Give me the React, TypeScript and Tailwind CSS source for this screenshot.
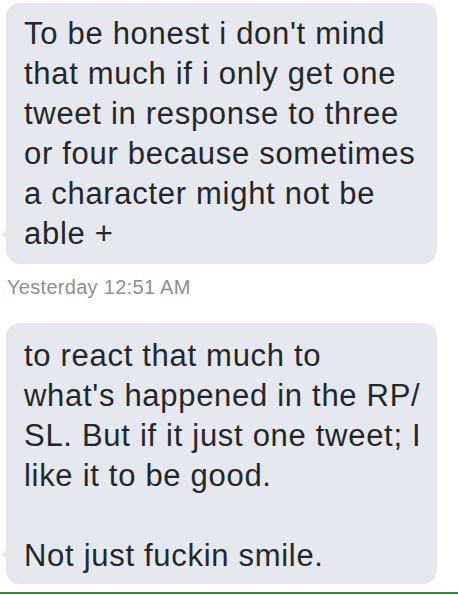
const font = { fontFamily: '"Liberation Sans", Arial, sans-serif' };

function Tail() {
  return (
    <svg
      className="absolute left-[-6px] bottom-[26px]"
      width="10"
      height="14"
      viewBox="0 0 10 14"
    >
      <path d="M10 0 C8 5 4 9 0 11 C3 12 7 13 10 14 Z" fill="#e5e8ef" />
    </svg>
  );
}

function Bubble({
  lines,
  className,
}: {
  lines: string[];
  className: string;
}) {
  return (
    <div
      className={`relative w-[431px] rounded-[14px] bg-[#e5e8ef] pl-[18px] text-[31px] leading-[40px] tracking-[0.7px] text-[#26272b] ${className}`}
    >
      {lines.map((l, i) => (
        <div key={i} className="whitespace-nowrap h-[40px]">
          {l}
        </div>
      ))}
      <Tail />
    </div>
  );
}

export default function App() {
  return (
    <div
      className="relative w-[458px] h-[595px] overflow-hidden bg-white pt-[3px] pl-[6px]"
      style={font}
    >
      <Bubble
        className="pt-[11px] pb-[10px]"
        lines={[
          "To be honest i don't mind",
          "that much if i only get one",
          "tweet in response to three",
          "or four because sometimes",
          "a character might not be",
          "able +",
        ]}
      />
      <div className="mt-[11px] pl-[1px] text-[20px] leading-[24px] tracking-[0.3px] text-[#8e8e93]">
        Yesterday 12:51 AM
      </div>
      <Bubble
        className="mt-[24px] pt-[13px] pb-[8px]"
        lines={[
          "to react that much to",
          "what's happened in the RP/",
          "SL. But if it just one tweet; I",
          "like it to be good.",
          "",
          "Not just fuckin smile.",
        ]}
      />
      <div className="absolute left-0 bottom-[1px] w-full h-[2px] bg-[#2e8b2e]" />
    </div>
  );
}
